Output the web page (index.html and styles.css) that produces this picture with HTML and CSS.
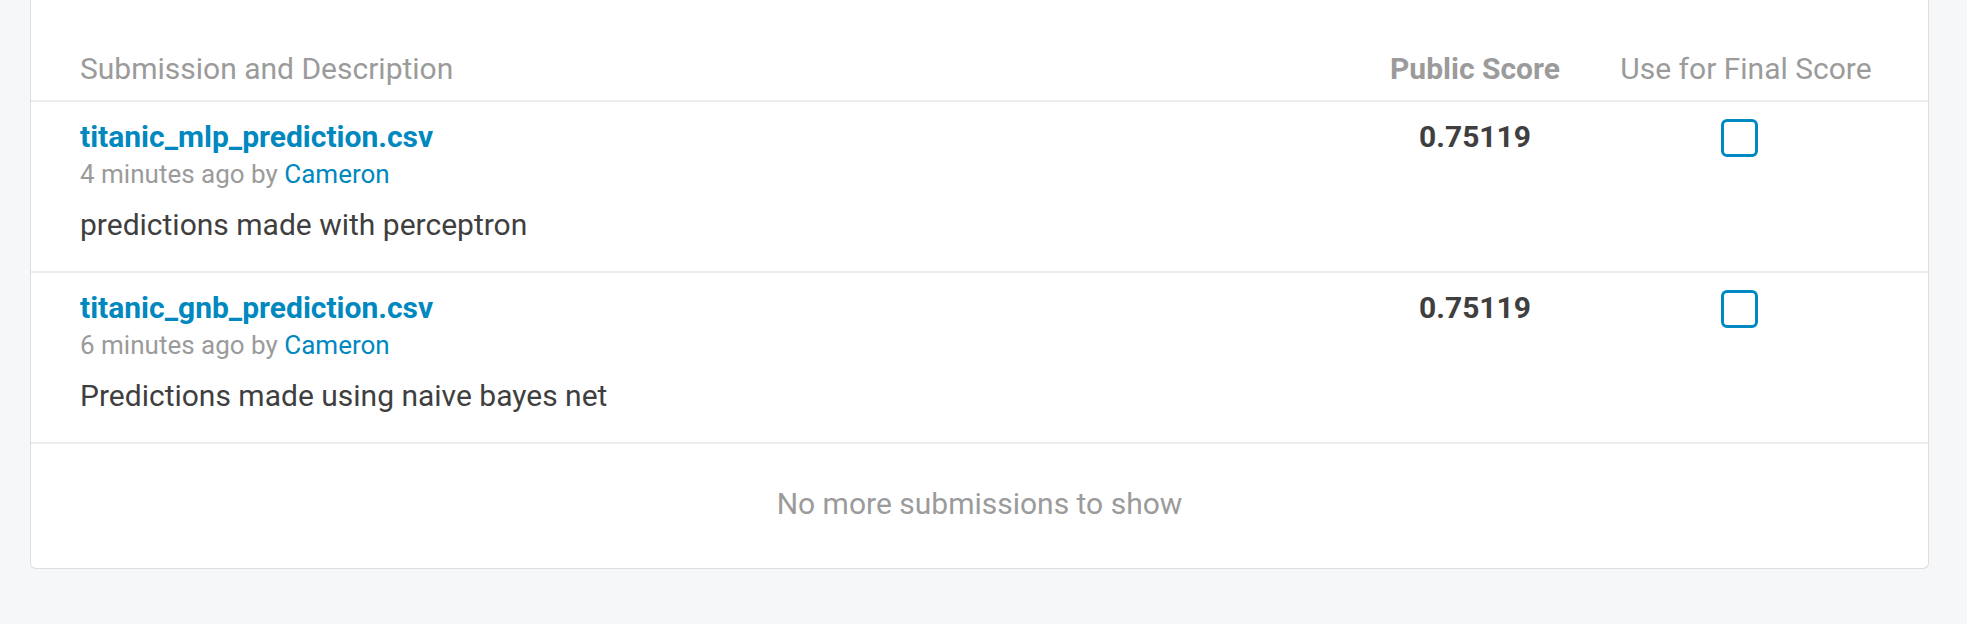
FILE: index.html
```html
<!DOCTYPE html>
<html lang="en">
<head>
<meta charset="utf-8">
<title>Submissions</title>
<link rel="stylesheet" href="styles.css">
</head>
<body>
<div class="card">
  <div class="grid head">
    <div class="col-desc">Submission and Description</div>
    <div class="col-score strong">Public Score</div>
    <div class="col-final">Use for Final Score</div>
  </div>
  <div class="grid row">
    <div class="col-desc">
      <a class="file" href="#">titanic_mlp_prediction.csv</a>
      <div class="meta">4 minutes ago by <a class="user" href="#">Cameron</a></div>
      <div class="desc">predictions made with perceptron</div>
    </div>
    <div class="col-score score">0.75119</div>
    <div class="col-final"><span class="check"></span></div>
  </div>
  <div class="grid row">
    <div class="col-desc">
      <a class="file" href="#">titanic_gnb_prediction.csv</a>
      <div class="meta">6 minutes ago by <a class="user" href="#">Cameron</a></div>
      <div class="desc">Predictions made using naive bayes net</div>
    </div>
    <div class="col-score score">0.75119</div>
    <div class="col-final"><span class="check"></span></div>
  </div>
  <div class="footer">No more submissions to show</div>
</div>
</body>
</html>
```

FILE: styles.css
```css
html, body {
  margin: 0;
  padding: 0;
}
body {
  background: #f5f7f8;
  font-family: Roboto, "Liberation Sans", sans-serif;
  font-size: 30px;
  line-height: 36px;
  color: #3f3f3f;
  height: 624px;
  overflow: hidden;
}
.card {
  margin: 0 38px 0 30px;
  background: #ffffff;
  border: 1px solid #dcdee0;
  border-top: none;
  border-radius: 0 0 6px 6px;
}
.grid {
  display: grid;
  grid-template-columns: 1fr 172px 252px;
  column-gap: 59px;
  padding: 0 56px 0 49px;
  border-bottom: 2px solid #ececec;
}
.head {
  padding-top: 51px;
  padding-bottom: 13px;
  color: #9b9b9b;
}
.head .strong {
  font-weight: 700;
}
.col-score {
  text-align: center;
}
.col-final {
  display: flex;
  justify-content: center;
}
.row {
  padding-top: 17px;
  padding-bottom: 28px;
}
.file {
  display: block;
  color: #0088bf;
  font-weight: 700;
  text-decoration: none;
}
.meta {
  margin-top: 4px;
  font-size: 26px;
  line-height: 30px;
  color: #9b9b9b;
}
.user {
  color: #0088bf;
  text-decoration: none;
}
.desc {
  margin-top: 18px;
  color: #3f3f3f;
}
.score {
  font-weight: 700;
  color: #3f3f3f;
}
.check {
  display: block;
  width: 31px;
  height: 32px;
  margin-left: -14px;
  border: 3px solid #0088c2;
  border-radius: 6px;
}
.footer {
  padding: 42px 0 46px;
  text-align: center;
  color: #9b9b9b;
}
```
